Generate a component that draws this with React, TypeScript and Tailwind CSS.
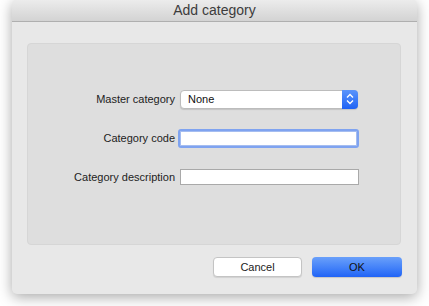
const font = { fontFamily: '"Liberation Sans", Arial, sans-serif' };

const Row = ({ label, children }: { label: string; children: React.ReactNode }) => (
  <>
    <div className="flex h-[20px] items-center justify-end text-[11px] text-[#222]">{label}</div>
    <div className="flex h-[20px] items-center">{children}</div>
  </>
);

export default function App() {
  return (
    <div className="h-[306px] w-[429px] bg-white pl-[12px]" style={font}>
      <div className="flex h-[294px] w-[405px] flex-col overflow-hidden rounded-[5px] bg-[#e8e8e8] shadow-[0_3px_14px_rgba(0,0,0,0.35)]">
        {/* Title bar */}
        <div className="flex h-[22px] items-center justify-center border-b border-[#afafaf] bg-gradient-to-b from-[#ececec] to-[#d3d3d3] text-[14px] text-[#3c3c3c]">
          Add category
        </div>

        {/* Form panel */}
        <div className="ml-[15px] mr-[16px] mt-[21px] h-[202px] rounded-[4px] border border-[#d6d6d6] bg-[#dedede] pt-[45px]">
          <div className="grid grid-cols-[147px_179px] gap-x-[5px] gap-y-[19px]">
            <Row label="Master category">
              <div className="flex h-[19px] w-[178px] items-center rounded-[4px] border border-[#bcbcbc] bg-white shadow-[0_1px_1px_rgba(0,0,0,0.12)]">
                <span className="flex-1 pl-[7px] text-[11px] text-[#111]">None</span>
                <div className="flex h-[19px] w-[16px] -mr-px items-center justify-center rounded-r-[4px] bg-gradient-to-b from-[#5a94fb] to-[#1f62f4]">
                  <svg width="8" height="12" viewBox="0 0 8 12" fill="none" stroke="white" strokeWidth="1.3">
                    <path d="M1 4.5 L4 1.5 L7 4.5" />
                    <path d="M1 7.5 L4 10.5 L7 7.5" />
                  </svg>
                </div>
              </div>
            </Row>
            <Row label="Category code">
              <div className="-ml-[2px] h-[19px] w-[181px] rounded-[3px] border-[2px] border-[#7fa3f0] bg-white">
                <div className="h-full w-full border border-[#a5bdf0]" />
              </div>
            </Row>
            <Row label="Category description">
              <div className="h-[16px] w-[179px] border border-[#a9a9a9] bg-white" />
            </Row>
          </div>
        </div>

        {/* Buttons */}
        <div className="mt-[12px] flex justify-end gap-[10px] pr-[15px]">
          <button className="h-[20px] w-[89px] rounded-[4px] border border-[#c4c4c4] bg-white text-[11px] text-[#222] shadow-[0_1px_1px_rgba(0,0,0,0.1)]">
            Cancel
          </button>
          <button className="h-[20px] w-[90px] rounded-[4px] bg-gradient-to-b from-[#6aa0fa] to-[#2063f6] text-[11px] text-[#111] shadow-[0_1px_1px_rgba(0,0,0,0.15)]">
            OK
          </button>
        </div>
      </div>
    </div>
  );
}
